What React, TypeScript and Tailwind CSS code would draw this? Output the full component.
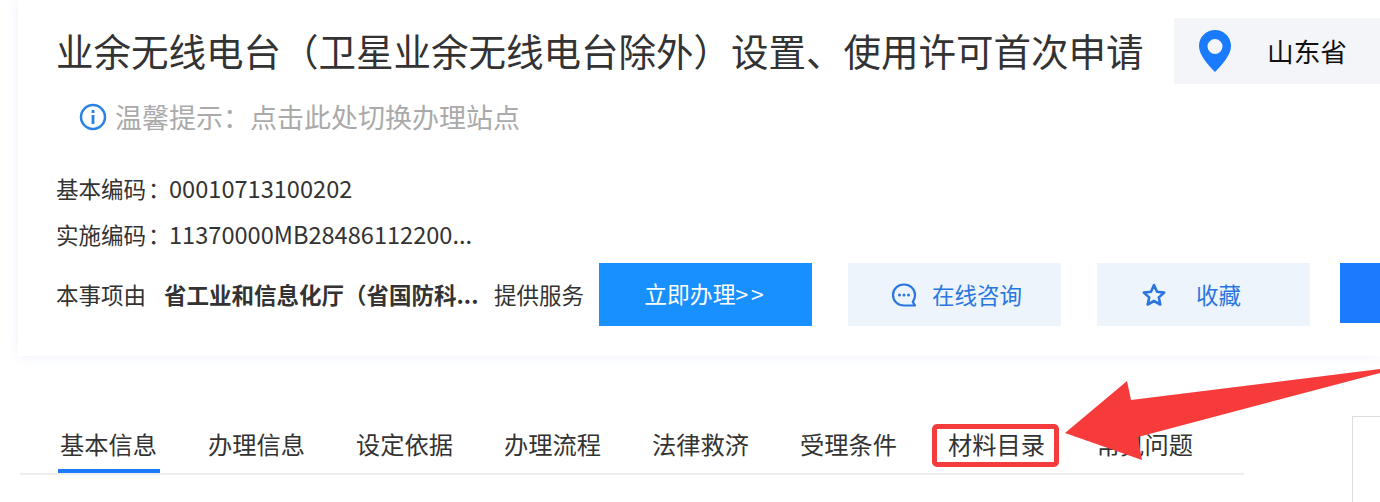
const font = { fontFamily: '"Noto Sans CJK SC", "Noto Sans", sans-serif' };

const tabs = ["基本信息", "办理信息", "设定依据", "办理流程", "法律救济", "受理条件", "材料目录", "常见问题"];

function Pin() {
  return (
    <svg width="34" height="44" viewBox="0 0 34 44">
      <path fillRule="evenodd" fill="#1a7bff" d="M17 1C8 1 1 8 1 17c0 9 9 19 16 26 7-7 16-17 16-26C33 8 26 1 17 1zm0 9a7.500 7.500 0 1 1 0 15 7.500 7.500 0 0 1 0-15z" />
    </svg>
  );
}

function Info() {
  return (
    <svg width="28" height="28" viewBox="0 0 28 28" fill="none">
      <circle cx="14" cy="14" r="12" stroke="#2a82e4" strokeWidth="2.500" />
      <rect x="12.600" y="7" width="2.800" height="3" fill="#2a82e4" />
      <rect x="12.600" y="12" width="2.800" height="9" fill="#2a82e4" />
    </svg>
  );
}

function Chat() {
  return (
    <svg width="26" height="26" viewBox="0 0 26 26" fill="none">
      <path d="M13 2.500C6.800 2.500 2 7 2 13s4.800 10.500 11 10.500h11l-2.200-3.600C23.200 18 24 15.700 24 13 24 7 19.200 2.500 13 2.500z" stroke="#2a76e0" strokeWidth="2.200" strokeLinejoin="round" />
      <circle cx="8.500" cy="13" r="1.500" fill="#2a76e0" />
      <circle cx="13" cy="13" r="1.500" fill="#2a76e0" />
      <circle cx="17.500" cy="13" r="1.500" fill="#2a76e0" />
    </svg>
  );
}

function Star() {
  return (
    <svg width="26" height="26" viewBox="0 0 26 26" fill="none">
      <path d="M13 3l3 6.800 7.200.8-5.400 4.800 1.500 7.100L13 19l-6.300 3.500 1.500-7.100L2.800 10.600l7.200-.8L13 3z" stroke="#2a76e0" strokeWidth="2.600" strokeLinejoin="round" />
    </svg>
  );
}

export default function App() {
  return (
    <div className="relative w-[1380px] h-[502px] overflow-hidden bg-white" style={font}>
      <div className="ml-[18px] h-[356px] bg-white shadow-[0_0_12px_rgba(225,232,250,0.6)] pl-[38px]">
        <div className="flex items-start pt-[18px]">
          <h1 className="w-[1118px] shrink-0 h-[66px] text-[37.500px] leading-[64px] text-[#333] font-normal whitespace-nowrap">
            业余无线电台（卫星业余无线电台除外）设置、使用许可首次申请
          </h1>
          <div className="flex items-center h-[66px] w-[300px] bg-[#f3f5f8] pl-[24px] shrink-0">
            <Pin />
            <span className="ml-[35px] text-[26.700px] text-[#111]">山东省</span>
          </div>
        </div>
        <div className="flex items-center h-[36px] mt-[15px] pl-[23px] gap-[8px]">
          <Info />
          <span className="text-[27px] leading-[36px] text-[#aaa]">温馨提示：点击此处切换办理站点</span>
        </div>
        <div className="mt-[30px] text-[22.500px] leading-[46px] text-[#333]">
          <div className="flex h-[46px]"><span className="w-[113px] shrink-0 whitespace-nowrap">基本编码<span className="ml-[2px]">：</span></span><span className="text-[23.600px]">00010713100202</span></div>
          <div className="flex h-[46px]"><span className="w-[113px] shrink-0 whitespace-nowrap">实施编码<span className="ml-[2px]">：</span></span><span className="text-[23.600px]">11370000MB28486112200...</span></div>
        </div>
        <div className="flex items-start mt-[6px]">
          <div className="flex items-center h-[63px] w-[543px] shrink-0 text-[#333]">
            <span className="text-[22.500px] w-[108px] shrink-0 whitespace-nowrap">本事项由</span>
            <span className="text-[22.500px] font-bold w-[330px] shrink-0 whitespace-nowrap">省工业和信息化厅（省国防科...</span>
            <span className="text-[22.500px] whitespace-nowrap">提供服务</span>
          </div>
          <div className="flex items-center justify-center w-[213px] shrink-0 h-[63px] bg-[#1890ff] text-white text-[22.800px]">立即办理<span className="tracking-[3px]">&gt;&gt;</span></div>
          <div className="flex items-center pl-[43px] gap-[15px] w-[213px] shrink-0 h-[63px] ml-[36px] bg-[#edf4fb] text-[#2a76e0] text-[22.500px]"><Chat />在线咨询</div>
          <div className="flex items-center pl-[44px] gap-[29px] w-[213px] shrink-0 h-[63px] ml-[36px] bg-[#edf4fb] text-[#2a76e0] text-[22.500px]"><Star />收藏</div>
          <div className="w-[60px] h-[60px] ml-[30px] bg-[#1a7bff] shrink-0" />
        </div>
      </div>

      <div className="flex items-start mt-[60px]">
        <div className="ml-[20px] w-[1224px] shrink-0 h-[59px] border-b-2 border-[#eeeeee] pl-[38px] flex">
          {tabs.map((t, i) => (
            <div
              key={t}
              className={
                i === 0
                  ? "w-[148px] shrink-0 h-[57px] text-[24.250px] leading-[56px] text-[#333]"
                  : "w-[148px] shrink-0 h-[57px] text-[24.250px] leading-[56px] text-[#333] pl-[2px]"
              }
            >
              <span className={i === 0 ? "inline-block w-[102px] h-[57px] border-b-[4px] border-[#1a7bff] pl-[2px]" : ""}>{t}</span>
            </div>
          ))}
        </div>
        <div className="ml-[108px] w-[40px] h-[100px] shrink-0 border-l border-t border-[#dddddd]" />
      </div>

      {/* annotation overlay */}
      <div className="absolute left-[932px] top-[424px] w-[127px] h-[43px] border-[5px] border-[#f53c3c] rounded-[5px]" />
      <svg className="absolute left-0 top-0" width="1380" height="502" viewBox="0 0 1380 502">
        <polygon fill="#f73b3b" points="1065,433 1127,381 1131,400 1380,369 1380,373 1138,437 1142,460" />
      </svg>
    </div>
  );
}
